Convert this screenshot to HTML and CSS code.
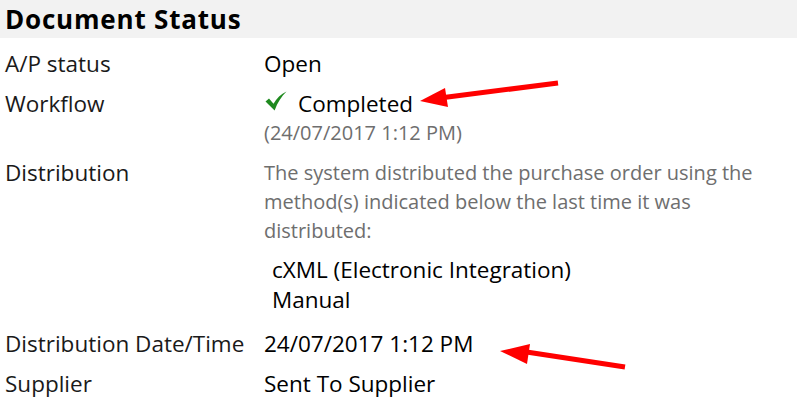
FILE: index.html
```html
<!DOCTYPE html>
<html>
<head>
<meta charset="utf-8">
<link rel="stylesheet" href="styles.css">
</head>
<body>
<div class="panel">
  <div class="header">Document Status</div>
  <div class="rows">
    <div class="row">
      <div class="label">A/P status</div>
      <div class="value">Open</div>
    </div>
    <div class="row">
      <div class="label">Workflow</div>
      <div class="value">
        <div class="status">
          <svg class="check" width="22" height="20" viewBox="0 0 22 20"><path d="M0.5 10.5 L4 7.5 L8.5 12.8 C11.5 7.5 16 3 21.5 0.5 C16.2 5.5 12.6 11.5 9.6 19.5 Z" fill="#1f8a1f"/></svg>
          <span>Completed</span>
        </div>
        <div class="muted">(24/07/2017 1:12 PM)</div>
      </div>
    </div>
    <div class="row">
      <div class="label">Distribution</div>
      <div class="value">
        <div class="muted">The system distributed the purchase order using the method(s) indicated below the last time it was distributed:</div>
        <ul class="methods">
          <li>cXML (Electronic Integration)</li>
          <li>Manual</li>
        </ul>
      </div>
    </div>
    <div class="row">
      <div class="label">Distribution Date/Time</div>
      <div class="value">24/07/2017 1:12 PM</div>
    </div>
    <div class="row">
      <div class="label">Supplier</div>
      <div class="value">Sent To Supplier</div>
    </div>
  </div>
  <svg class="arrows" width="797" height="410" viewBox="0 0 797 410">
    <line x1="558" y1="83" x2="440" y2="98" stroke="#ff0000" stroke-width="5"/>
    <polygon points="420,101 445,88 448,107" fill="#ff0000"/>
    <line x1="625" y1="367" x2="520" y2="351" stroke="#ff0000" stroke-width="5"/>
    <polygon points="500,351 530,344 527,364" fill="#ff0000"/>
  </svg>
</div>
</body>
</html>
```
FILE: styles.css
```css
* { box-sizing: border-box; }
html, body { margin: 0; padding: 0; background: #fff; }
body {
  font-family: "Open Sans", "Noto Sans", sans-serif;
  font-size: 22.5px;
  color: #1a1a1a;
  width: 797px;
  height: 410px;
  overflow: hidden;
}
.panel { position: relative; width: 797px; height: 410px; }
.header {
  height: 38px;
  background: #f2f2f2;
  font-weight: 700;
  font-size: 26px;
  letter-spacing: 0.8px;
  line-height: 38px;
  padding-left: 5px;
  color: #000;
}
.rows { padding-top: 5px; }
.row {
  display: grid;
  grid-template-columns: 259px 1fr;
  padding: 5.5px 0 5.5px 5px;
  line-height: 29px;
}
.label { white-space: nowrap; }
.value { color: #000; padding-right: 30px; }
.muted { color: #6e6e6e; font-size: 20px; }
.status { display: flex; align-items: center; gap: 11px; padding-left: 1px; }
.check { display: block; margin-top: -4px; }
.methods {
  list-style: none;
  margin: 10px 0 3px 0;
  padding: 0 0 0 8px;
  line-height: 30px;
  color: #000;
}
.arrows { position: absolute; left: 0; top: 0; pointer-events: none; }
```
